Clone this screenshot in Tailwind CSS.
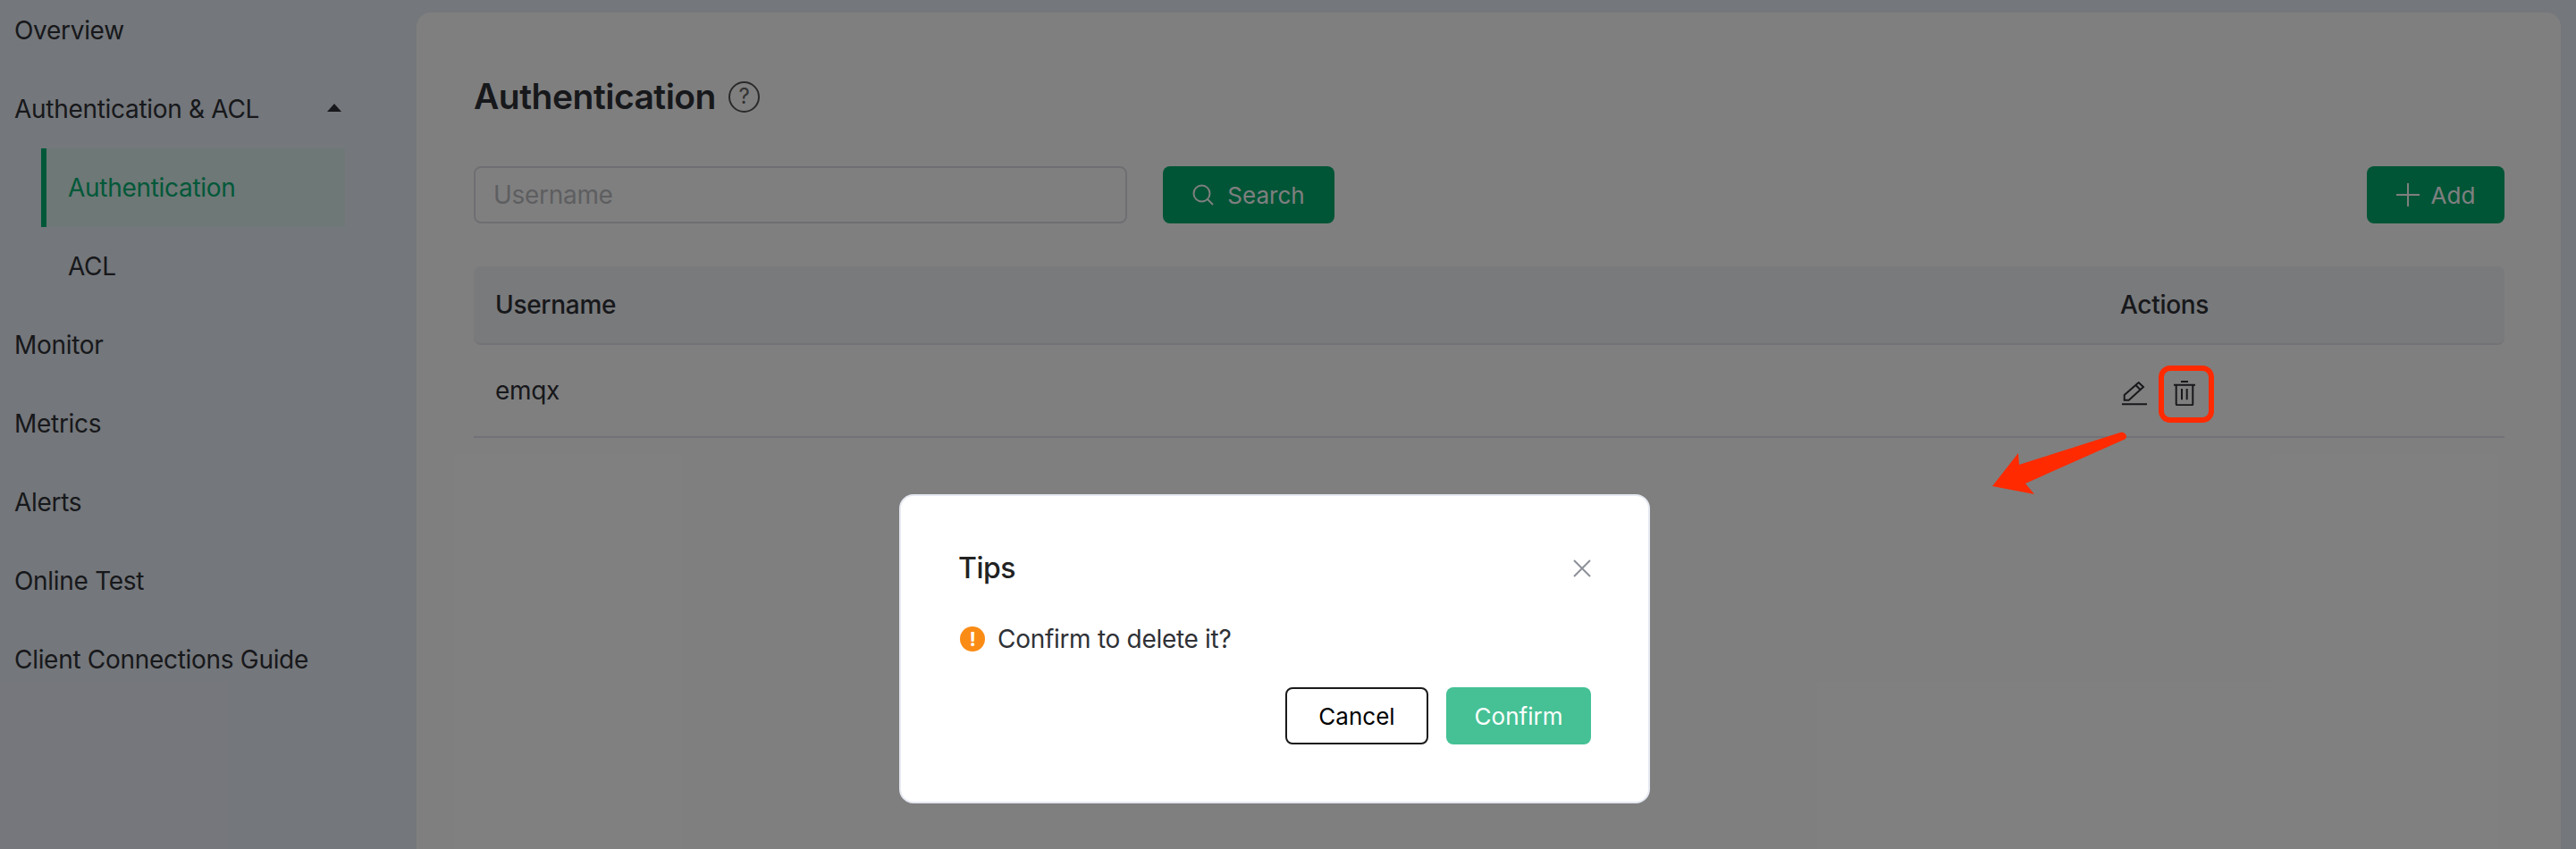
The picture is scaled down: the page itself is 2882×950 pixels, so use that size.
<!DOCTYPE html>
<html lang="en">
<head>
  <meta charset="UTF-8" />
  <title>Authentication</title>
  <script src="https://cdn.jsdelivr.net/npm/@tailwindcss/browser@4"></script>
</head>
<body class="relative h-[950px] overflow-hidden bg-[#e9eef7] font-['Inter',sans-serif] text-[28px] tracking-[-0.3px] text-[#2f3136]">

  <div class="flex h-[950px]">
    <!-- Sidebar -->
    <aside class="w-[466px] shrink-0 -mt-[10px]">
      <div class="flex h-[88px] items-center pl-4">Overview</div>
      <div class="flex h-[88px] items-center justify-between pl-4 pr-[84px]">
        <span>Authentication &amp; ACL</span>
        <span class="-mt-[4px] h-0 w-0 border-x-[8px] border-b-[9px] border-x-transparent border-b-[#2f3136]"></span>
      </div>
      <div class="ml-[46px] mr-[80px] flex h-[88px] items-center border-l-[6px] border-[#00b173] bg-[#dcf0ec] pl-[24px] text-[#00b173]">Authentication</div>
      <div class="ml-[46px] flex h-[88px] items-center pl-[30px]">ACL</div>
      <div class="flex h-[88px] items-center pl-4">Monitor</div>
      <div class="flex h-[88px] items-center pl-4">Metrics</div>
      <div class="flex h-[88px] items-center pl-4">Alerts</div>
      <div class="flex h-[88px] items-center pl-4">Online Test</div>
      <div class="flex h-[88px] items-center pl-4">Client Connections Guide</div>
    </aside>

    <!-- Main -->
    <main class="mr-[17px] mt-[14px] flex-1 rounded-t-[16px] bg-white pl-[64px] pr-[63px] pt-[66px]">
      <div class="flex h-[56px] items-center">
        <h1 class="text-[39px] font-semibold tracking-[-0.5px] text-[#2f3136]">Authentication</h1>
        <span class="ml-[14px] flex h-[35px] w-[35px] items-center justify-center rounded-full border-2 border-[#555] text-[24px] text-[#666]">?</span>
      </div>

      <div class="mt-[50px] flex h-[64px] items-center">
        <div class="flex h-[64px] w-[731px] items-center rounded-lg border-2 border-[#dcdde6] pl-[20px] text-[#bdbdc2]">Username</div>
        <button class="ml-[40px] flex h-[64px] w-[192px] items-center justify-center gap-[15px] rounded-lg bg-[#00aa6c] text-[26px] tracking-normal text-white">
          <svg width="24" height="24" viewBox="0 0 24 24" fill="none" stroke="currentColor" stroke-width="2"><circle cx="10.500" cy="10.500" r="9"/><path d="M17 17l6 6"/></svg>
          <span>Search</span>
        </button>
        <button class="ml-auto flex h-[64px] w-[154px] items-center justify-center gap-[13px] rounded-lg bg-[#00aa6c] text-[26px] tracking-normal text-white">
          <svg width="26" height="26" viewBox="0 0 26 26" fill="none" stroke="currentColor" stroke-width="2"><path d="M13 0v26M0 13h26"/></svg>
          <span>Add</span>
        </button>
      </div>

      <div class="mt-[48px]">
        <div class="flex h-[88px] items-center rounded-lg border-b-2 border-[#e6e6ee] bg-[#f2f4f8] font-medium">
          <div class="flex-1 px-6">Username</div>
          <div class="w-[454px] px-6">Actions</div>
        </div>
        <div class="flex h-[104px] items-center border-b-2 border-[#e4e3ee]">
          <div class="flex-1 px-6">emqx</div>
          <div class="mt-[6px] flex w-[454px] items-center gap-[30px] pl-[26px]">
            <svg width="28" height="27" viewBox="0 0 28 27" fill="none" stroke="#2f3136" stroke-width="2"><path d="M2.700 20.700V15L18.700 1 24 6 7.700 20.700zM15.500 4l5.500 5.500M0 25.300h28"/></svg>
            <svg width="24" height="28" viewBox="0 0 24 28" fill="none" stroke="#2f3136" stroke-width="2"><path d="M8 1h8M0 4.700h24M2.700 4.700V26a1.300 1.300 0 0 0 1.300 1.300h16a1.300 1.300 0 0 0 1.300-1.300V4.700M9 9v12.300M14.700 9v12.300"/></svg>
          </div>
        </div>
      </div>
    </main>
  </div>

  <!-- Dialog overlay -->
  <div class="absolute inset-0 flex items-start bg-black/50 pl-[1006px] pt-[553px]">
    <div class="h-[346px] w-[840px] rounded-[16px] border-2 border-[#e6e9f2] bg-white pl-[64px] pr-[64px] pt-[61px]">
      <div class="flex h-[40px] items-center justify-between">
        <span class="text-[32px] font-medium leading-none tracking-[-0.5px] text-[#222]">Tips</span>
        <svg width="20" height="20" viewBox="0 0 20 20" fill="none" stroke="#8d9099" stroke-width="2"><path d="M1 1l18 18M19 1L1 19"/></svg>
      </div>
      <div class="mt-[39px] flex h-[40px] items-center gap-[14px] text-[#2f3136]">
        <span class="ml-[2px] flex h-[28px] w-[28px] items-center justify-center rounded-full bg-[#fa8c16] text-[22px] font-bold text-white">!</span>
        <span>Confirm to delete it?</span>
      </div>
      <div class="mt-[34px] flex justify-end gap-[20px]">
        <button class="flex h-[64px] w-[160px] items-center justify-center rounded-lg border-2 border-[#1a1a1a] bg-white text-[26px] tracking-normal text-black">Cancel</button>
        <button class="flex h-[64px] w-[162px] items-center justify-center rounded-lg bg-[#45c195] text-[26px] tracking-normal text-white">Confirm</button>
      </div>
    </div>
  </div>

  <!-- Red annotations drawn on top of the screenshot -->
  <svg class="absolute left-0 top-0" width="2882" height="950" viewBox="0 0 2882 950" fill="none">
    <rect x="2418" y="412" width="56" height="58" rx="10" stroke="#ff2a00" stroke-width="6"/>
    <path d="M2229 544L2258 507 2259 520 2372 484C2378 482 2382 490 2376 492L2266 541 2276 553z" fill="#ff2a00"/>
  </svg>
</body>
</html>
